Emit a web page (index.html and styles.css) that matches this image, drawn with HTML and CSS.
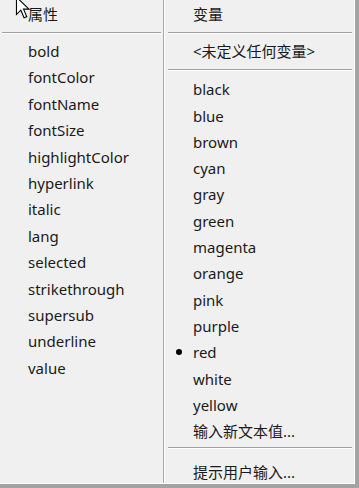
FILE: index.html
```html
<!DOCTYPE html>
<html lang="zh-CN">
<head>
<meta charset="UTF-8">
<meta name="viewport" content="width=device-width, initial-scale=1.0">
<title>属性与变量</title>
<link rel="stylesheet" href="styles.css">
</head>
<body>
<div class="frame">
    <div class="menu">
        <div class="col col-left">
            <div class="head">属性</div>
            <div class="sep"></div>
            <div class="item">bold</div>
            <div class="item">fontColor</div>
            <div class="item">fontName</div>
            <div class="item">fontSize</div>
            <div class="item">highlightColor</div>
            <div class="item">hyperlink</div>
            <div class="item">italic</div>
            <div class="item">lang</div>
            <div class="item">selected</div>
            <div class="item">strikethrough</div>
            <div class="item">supersub</div>
            <div class="item">underline</div>
            <div class="item">value</div>
        </div>
        <div class="col col-right">
            <div class="head">变量</div>
            <div class="sep"></div>
            <div class="item">&lt;未定义任何变量&gt;</div>
            <div class="sep sep-mid"></div>
            <div class="item">black</div>
            <div class="item">blue</div>
            <div class="item">brown</div>
            <div class="item">cyan</div>
            <div class="item">gray</div>
            <div class="item">green</div>
            <div class="item">magenta</div>
            <div class="item">orange</div>
            <div class="item">pink</div>
            <div class="item">purple</div>
            <div class="item checked">red</div>
            <div class="item">white</div>
            <div class="item">yellow</div>
            <div class="item">输入新文本值...</div>
            <div class="sep sep-low"></div>
            <div class="item">提示用户输入...</div>
        </div>
    </div>
    <svg class="cursor" width="16" height="24" viewBox="0 0 14 22">
        <path d="M1 1 L1 17 L5 13 L8 20 L10.5 19 L7.5 12 L12.5 12 Z" fill="#fff" stroke="#000" stroke-width="1" stroke-linejoin="miter"/>
    </svg>
</div>
</body>
</html>
```

FILE: styles.css
```css
html, body {
    margin: 0;
    padding: 0;
    background: #f0f0f0;
}
body {
    font-family: "Noto Sans", "Noto Sans CJK SC", sans-serif;
    font-size: 15px;
    color: #1a1a1a;
}
.frame {
    position: relative;
    width: 359px;
    height: 488px;
    box-sizing: border-box;
    border-right: 4px solid #a3a3a3;
    border-bottom: 4px solid #a3a3a3;
    overflow: hidden;
}
.menu {
    display: flex;
    height: 100%;
    box-sizing: border-box;
    border-right: 1px solid #fff;
    border-bottom: 1px solid #fff;
}
.col-left {
    width: 164px;
    border-right: 1px solid #a8a8a8;
    padding: 0 2px 0 2px;
    box-sizing: border-box;
}
.col-right {
    flex: 1;
    border-left: 1px solid #fff;
    padding: 0 2px 0 2px;
}
.head {
    height: 32px;
    line-height: 28px;
    padding-left: 26px;
}
.col-right .head,
.col-right .item {
    padding-left: 26px;
}
.sep {
    border-top: 1px solid #a0a0a0;
    border-bottom: 1px solid #fff;
    margin: 0 0 4px 0;
}
.col-right .sep {
    margin-left: 1px;
}
.sep-mid {
    margin: 5px 0 5px 0;
}
.sep-low {
    margin: 3px 0 10px 0;
}
.item {
    position: relative;
    height: 26.4px;
    line-height: 26.4px;
    padding-left: 26px;
    white-space: nowrap;
}
.col-right .item {
    height: 26.3px;
    line-height: 26.3px;
}
.checked::before {
    content: "";
    position: absolute;
    left: 9px;
    top: 10px;
    width: 6px;
    height: 6px;
    border-radius: 50%;
    background: #000;
}
.cursor {
    position: absolute;
    left: 15px;
    top: -4px;
}
```
